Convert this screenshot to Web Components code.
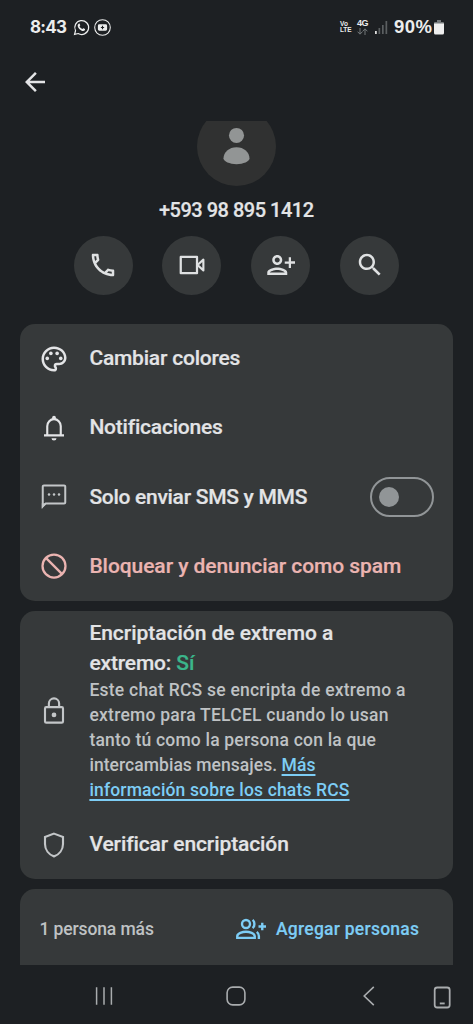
<!DOCTYPE html>
<html lang="es">
<head>
<meta charset="utf-8">
<title>Detalles del chat</title>
<style>
html,body{margin:0;height:100%;background:#1d2023;overflow:hidden}
body{font-family:Roboto,"Open Sans",sans-serif;color:#e3e4e6}
</style>
</head>
<body>
<chat-details></chat-details>
<script>
const define=(name,css,html,ready)=>{
  const t=document.createElement('template');
  t.innerHTML=`<style>:host{box-sizing:border-box}*{box-sizing:border-box}${css}</style>${html}`;
  customElements.define(name,class extends HTMLElement{
    connectedCallback(){
      if(this.shadowRoot)return;
      this.attachShadow({mode:'open'}).append(t.content.cloneNode(true));
      if(ready)ready.call(this,this.shadowRoot);
    }
  });
};

const ICONS={
  back:'<path d="M20 11H7.83l5.59-5.59L12 4l-8 8 8 8 1.41-1.41L7.83 13H20v-2z"/>',
  call:'<path d="M6.54 5c.06.89.21 1.76.45 2.59l-1.2 1.2c-.41-1.2-.67-2.47-.76-3.79h1.51m9.86 12.02c.85.24 1.72.39 2.6.45v1.49c-1.32-.09-2.59-.35-3.8-.75l1.2-1.19M7.5 3H4c-.55 0-1 .45-1 1 0 9.39 7.61 17 17 17 .55 0 1-.45 1-1v-3.49c0-.55-.45-1-1-1-1.24 0-2.45-.2-3.57-.57a.84.84 0 0 0-.31-.05c-.26 0-.51.1-.71.29l-2.2 2.2a15.149 15.149 0 0 1-6.59-6.59l2.2-2.2c.28-.28.36-.67.25-1.02A11.36 11.36 0 0 1 8.5 4c0-.55-.45-1-1-1z"/>',
  video:'<g fill="none" stroke="currentColor" stroke-width="1.8" stroke-linejoin="round"><path d="M3 5.500h13v13H3z"/><path d="M16.400 12l4.700-4.300v8.600z" stroke-width="1.700"/></g>',
  add:'<path d="M13 8c0-2.21-1.79-4-4-4S5 5.79 5 8s1.79 4 4 4 4-1.79 4-4zm-2 0c0 1.1-.9 2-2 2s-2-.9-2-2 .9-2 2-2 2 .9 2 2zM1 18v2h16v-2c0-2.66-5.33-4-8-4s-8 1.34-8 4zm2 0c.2-.71 3.3-2 6-2 2.69 0 5.78 1.28 6 2H3zM20 14.3V10.900h3.200v-1.800H20V5.800h-1.800v3.300H15v1.800h3.200v3.400z"/>',
  search:'<path d="M15.5 14h-.79l-.28-.27C15.41 12.59 16 11.11 16 9.5 16 5.91 13.09 3 9.5 3S3 5.91 3 9.5 5.91 16 9.5 16c1.61 0 3.09-.59 4.23-1.57l.27.28v.79l5 4.99L20.49 19l-4.99-5zm-6 0C7.01 14 5 11.99 5 9.5S7.01 5 9.5 5 14 7.01 14 9.5 11.99 14 9.5 14z"/>',
  palette:'<path d="M12 22C6.49 22 2 17.51 2 12S6.49 2 12 2s10 4.04 10 9c0 3.31-2.69 6-6 6h-1.77c-.28 0-.5.22-.5.5 0 .12.05.23.13.33.41.47.64 1.06.64 1.67A2.5 2.5 0 0 1 12 22zm0-18c-4.41 0-8 3.59-8 8s3.59 8 8 8c.28 0 .5-.22.5-.5a.54.54 0 0 0-.14-.35c-.41-.46-.63-1.05-.63-1.65a2.5 2.5 0 0 1 2.5-2.5H16c2.21 0 4-1.79 4-4 0-3.86-3.59-7-8-7z"/><circle cx="6.6" cy="11.500" r="1.450"/><circle cx="9.500" cy="7.500" r="1.450"/><circle cx="14.500" cy="7.500" r="1.450"/><circle cx="17.400" cy="11.500" r="1.450"/>',
  bell:'<path d="M6.6 17.600V10.500a5.400 5.600 0 0 1 10.800 0V17.600M4 17.900h16" fill="none" stroke="currentColor" stroke-width="1.700"/><path d="M10.500 5V3.600a1.500 1.500 0 0 1 3 0V5zM10 20.200h4a2 1.800 0 0 1-4 0z"/>',
  sms:'<path d="M3 19.400V3.700a.9.9 0 0 1 .9-.9h16.200a.9.9 0 0 1 .9.9v12.600a.9.9 0 0 1-.9.9H5.400z" fill="none" stroke="currentColor" stroke-width="1.600"/><path d="M2.250 21.600V17l3.500.2z"/><circle cx="8" cy="10" r="1"/><circle cx="12" cy="10" r="1"/><circle cx="16" cy="10" r="1"/>',
  block:'<g fill="none" stroke="currentColor" stroke-width="1.800"><circle cx="12" cy="12" r="9.200"/><path d="M5.500 5.500l13 13"/></g>',
  lock:'<g fill="none" stroke="currentColor" stroke-width="1.700"><rect x="4.800" y="8.900" width="14.400" height="12.400" rx="1"/><path d="M7.900 8.900V6a4.100 4.100 0 0 1 8.200 0v2.900"/></g><circle cx="12" cy="15.100" r="1.900"/>',
  shield:'<path d="M12 2.900l7.200 2.700v5.500c0 4.700-3 8.500-7.200 10-4.200-1.500-7.200-5.300-7.200-10V5.600z" fill="none" stroke="currentColor" stroke-width="1.700"/>',
  group:'<g fill="none" stroke="currentColor" stroke-width="1.900"><circle cx="8" cy="8" r="3.200"/><path d="M1 19.100v-1.300c0-2.300 4.300-3.600 7-3.600s7 1.300 7 3.600v1.300z"/><path d="M13.300 4.700c1.900 1.500 1.900 5.100 0 6.600M16.600 14.300c1.200.9 1.700 2 1.700 3.200V20M21 7v6M18 10h6"/></g>',
  whatsapp:'<path d="M2.200 21.800l1.400-5.200A9.800 9.800 0 1 1 7.300 20.500z" fill="none" stroke="currentColor" stroke-width="1.700"/><path d="M8.100 6.700c.6-.4 1.200-.2 1.400.3l.7 1.700c.2.600-.5 1-1 1.600.9 1.800 2.200 3.100 4.100 3.900.6-.5 1.100-1.300 1.700-1l1.800.9c.5.3.4 1-.1 1.800-.9 1.200-2.400 1.400-3.800.9-3.200-1.200-5.400-3.500-6.200-6.500-.3-1.500.2-2.800 1.400-3.600z"/>',
  play:'<circle cx="12" cy="12" r="11" fill="none" stroke="currentColor" stroke-width="1.500"/><path fill-rule="evenodd" d="M7.500 7.500h9a2 2 0 0 1 2 2v5a2 2 0 0 1-2 2h-9a2 2 0 0 1-2-2v-5a2 2 0 0 1 2-2zm3.700 2.200v1.500H9.700v1.600h1.500v1.600h1.600v-1.600h1.500v-1.600h-1.500V9.700z"/>',
  person:'<circle cx="12" cy="5.200" r="4.650"/><path d="M4 19.300C4 15.400 7.500 12.400 12 12.400s8 3 8 6.900c0 2-3.800 3.600-8 3.600s-8-1.600-8-3.600z"/>',
  recents:'<path d="M4.600 3.200v17.600M12 3.200v17.600M19.400 3.200v17.600" fill="none" stroke="currentColor" stroke-width="1.500"/>',
  home:'<rect x="3.100" y="3.100" width="17.800" height="17.800" rx="5.600" fill="none" stroke="currentColor" stroke-width="1.600"/>',
  prev:'<path d="M16.800 2.800L7.200 12l9.600 9.200" fill="none" stroke="currentColor" stroke-width="1.600"/>',
  phone:'<rect x="4.500" y="2.400" width="14.400" height="19.200" rx="2.400" fill="none" stroke="currentColor" stroke-width="1.700"/><path d="M9.400 17.700h4.700" stroke="currentColor" stroke-width="1.800"/>'
};
customElements.define('ui-icon',class extends HTMLElement{
  connectedCallback(){
    if(this.shadowRoot)return;
    const s=this.getAttribute('size')||30;
    this.attachShadow({mode:'open'}).innerHTML=`<style>:host{display:block;flex:none;width:${s}px;height:${s}px}svg{display:block;overflow:visible}</style><svg width="${s}" height="${s}" viewBox="0 0 24 24" fill="currentColor">${ICONS[this.getAttribute('name')]}</svg>`;
  }
});

/* One line of text whose tracking is adjusted so that it fills the given width. */
define('ui-line',':host{display:block;white-space:nowrap;flex:none}span{display:inline-block}','<span><slot></slot></span>',function(r){
  const w=+this.getAttribute('w'),s=r.querySelector('span');
  if(!w)return;
  const n=this.textContent.length,d=(w-s.getBoundingClientRect().width)/(n-1);
  s.style.letterSpacing=d+'px';s.style.marginRight=-d+'px';
});

define('status-bar',`:host{display:flex;align-items:center;height:54px;padding:0 29px 0 30px;color:#eceded;font-weight:700}
ui-line{font:700 17px/20px Inter,sans-serif}.wa{margin-left:6px}.pl{margin-left:4px}.sp{flex:1}
.pct{font:700 18.500px/20px "Liberation Sans",sans-serif}
.volte{font:700 6.500px/6.500px "Liberation Sans",sans-serif;width:11px;margin-right:6px}.net{width:12px;margin-right:6px}
.net ui-line{font:700 9px/9px "Liberation Sans",sans-serif}svg{display:block}.sig{margin-right:6px}.bat{margin-left:2px}`,
`<ui-line w="37">8:43</ui-line><ui-icon class="wa" name="whatsapp" size="17"></ui-icon><ui-icon class="pl" name="play" size="17"></ui-icon><div class="sp"></div>
<div class="volte"><ui-line style="font:inherit" w="8">Vo</ui-line><ui-line style="font:inherit" w="11.500">LTE</ui-line></div>
<div class="net"><ui-line w="11.500">4G</ui-line><svg width="11" height="7" viewBox="0 0 11 7" fill="none" stroke="#74787b" stroke-width="1"><path d="M3 0v6M.6 3.700L3 6.200l2.400-2.500M8 7V1M5.700 3.300L8 .8l2.400 2.500"/></svg></div>
<svg class="sig" width="13" height="13" viewBox="0 0 13 13"><path d="M0 10h1.800v3H0z" fill="#ddd"/><path d="M3.500 7h1.700v6H3.500zM7 4h1.700v9H7zM10.500 0h1.700v13h-1.700z" fill="#5b5f61"/></svg>
<ui-line class="pct" w="38">90%</ui-line>
<svg class="bat" width="10" height="15" viewBox="0 0 10 15"><path d="M3 0h4v2h2a1 1 0 0 1 1 1v1H0V3a1 1 0 0 1 1-1h2z" fill="#74787a"/><path d="M0 3.500h10V13a1.500 1.500 0 0 1-1.500 1.500h-7A1.500 1.500 0 0 1 0 13z" fill="#eee"/></svg>`);

define('app-bar',':host{display:flex;align-items:center;height:67px;padding:0 19.500px 12px}','<ui-icon name="back"></ui-icon>');

define('contact-head',`:host{display:flex;flex-direction:column;align-items:center}
.clip{height:65px;overflow:hidden;display:flex;align-items:flex-end}
.av{width:79px;height:79px;border-radius:50%;background:#303131;color:#929595;display:grid;place-items:center;flex:none}
ui-line{font-size:20px;line-height:26px;font-weight:500;margin-top:11px;-webkit-text-stroke:.2px currentColor}`,
'<div class="clip"><div class="av"><ui-icon name="person" size="39"></ui-icon></div></div><ui-line w="155">+593 98 895 1412</ui-line>');

define('round-button',':host{display:grid;place-items:center;width:59px;height:59px;border-radius:50%;background:#36393a;color:#dfe1e2}','<slot></slot>');
define('action-row',':host{display:flex;justify-content:center;gap:29.900px;margin:12.500px .3px 0 0}',
['call','video','add','search'].map(n=>`<round-button><ui-icon name="${n}"></ui-icon></round-button>`).join(''));

define('option-card',':host{display:block;margin:0 20px 10px;border-radius:15px;background:#36393a}','<slot></slot>');
define('option-row',`:host{display:flex;align-items:center;height:69.250px;padding:0 19.500px 0 19.400px;font-size:21px;font-weight:500;line-height:30px;-webkit-text-stroke:.2px currentColor}
.t{margin-left:20px;flex:1;margin-top:-1px}::slotted(*){flex:none}`,'<slot name="icon"></slot><div class="t"><slot></slot></div><slot name="end"></slot>');
define('toggle-switch',':host{display:flex;align-items:center;width:64px;height:40px;border:2.500px solid #919597;border-radius:20px;padding-left:7px}i{width:20px;height:20px;border-radius:50%;background:#919597}','<i></i>');

define('encryption-info',`:host{display:flex;align-items:center;height:199px;padding:0 19.400px}
ui-icon{color:#c3c6c8}.b{margin-left:20px}
.h ui-line{font-size:21px;line-height:30px;font-weight:500;-webkit-text-stroke:.2px currentColor}
.p ui-line{font-size:17.500px;line-height:25px;font-weight:500;color:#bfc2c4}
.g{color:#3bb58b}.p a{color:#7dcdf5;text-decoration:underline;text-decoration-thickness:1.500px;text-underline-offset:3px}`,
`<ui-icon name="lock"></ui-icon><div class="b"><div class="h"><ui-line w="244">Encriptación de extremo a</ui-line><ui-line w="105">extremo: <span class="g">Sí</span></ui-line></div>
<div class="p"><ui-line w="316">Este chat RCS se encripta de extremo a</ui-line><ui-line w="299">extremo para TELCEL cuando lo usan</ui-line><ui-line w="286.500">tanto tú como la persona con la que</ui-line><ui-line w="226">intercambias mensajes. <a>Más</a></ui-line><ui-line w="260"><a>información sobre los chats RCS</a></ui-line></div></div>`);

define('people-bar',`:host{display:flex;align-items:center;height:76px;margin:0 20px;padding:3px 34px 0 19.400px;border-radius:15px 15px 0 0;background:#36393a;font-size:17.500px;line-height:24px;font-weight:500;color:#bfc2c4}
.a{display:flex;align-items:center;margin-left:auto;gap:10px;color:#7dcdf5;-webkit-text-stroke:.15px currentColor}`,
'<ui-line w="114.500">1 persona más</ui-line><div class="a"><ui-icon name="group"></ui-icon><ui-line w="143">Agregar personas</ui-line></div>');

define('nav-bar',`:host{display:grid;grid-template-columns:24px 24px 24px 24px;column-gap:108.700px;align-items:center;height:59px;padding:3px 0 0 91.700px;color:#a9acae}
.k{margin-left:-60px;margin-top:3px}`,
'<ui-icon name="recents" size="24"></ui-icon><ui-icon name="home" size="24"></ui-icon><ui-icon name="prev" size="24"></ui-icon><ui-icon class="k" name="phone" size="25"></ui-icon>');

define('chat-details',`:host{display:flex;flex-direction:column;width:473px;height:1024px;background:#1d2023;overflow:hidden}
.m{height:844px;flex:none;overflow:hidden}.first{margin-top:29.500px}.red{color:#ebb4b1}.dim{color:#c3c6c8}`,
`<status-bar></status-bar><app-bar></app-bar>
<div class="m"><contact-head></contact-head><action-row></action-row>
<option-card class="first">
<option-row><ui-icon slot="icon" name="palette"></ui-icon><ui-line w="151">Cambiar colores</ui-line></option-row>
<option-row><ui-icon slot="icon" name="bell"></ui-icon><ui-line w="133">Notificaciones</ui-line></option-row>
<option-row><ui-icon slot="icon" class="dim" name="sms"></ui-icon><ui-line w="218">Solo enviar SMS y MMS</ui-line><toggle-switch slot="end"></toggle-switch></option-row>
<option-row class="red"><ui-icon slot="icon" name="block"></ui-icon><ui-line w="312">Bloquear y denunciar como spam</ui-line></option-row>
</option-card>
<option-card><encryption-info></encryption-info>
<option-row><ui-icon slot="icon" class="dim" name="shield"></ui-icon><ui-line w="199">Verificar encriptación</ui-line></option-row></option-card>
<people-bar></people-bar></div><nav-bar></nav-bar>`);
</script>
</body>
</html>
